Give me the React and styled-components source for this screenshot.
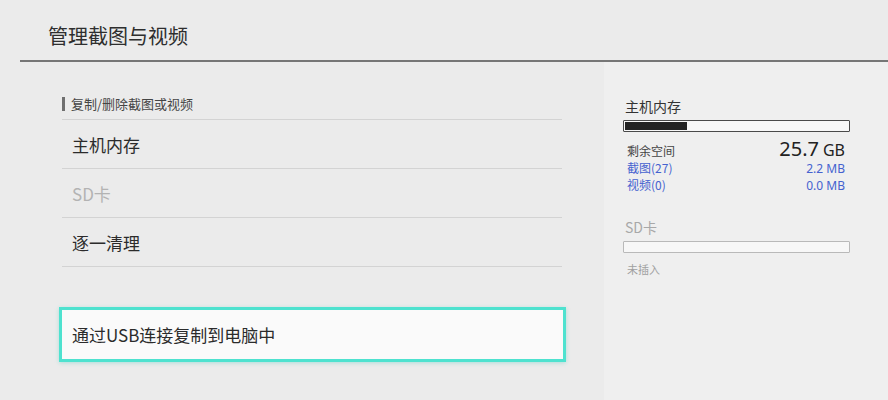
import React from "react";
import styled, { createGlobalStyle } from "styled-components";

const Global = createGlobalStyle`
  html, body { margin: 0; padding: 0; }
  body {
    font-family: "Noto Sans", "Noto Sans CJK SC", sans-serif;
    background: #ebebeb;
  }
`;

const Page = styled.div`
  width: 888px;
  height: 400px;
  overflow: hidden;
  background: #ebebeb;
  display: flex;
  flex-direction: column;
`;

const Header = styled.header`
  height: 62px;
  margin-left: 20px;
  padding-left: 28px;
  border-bottom: 2px solid #767676;
  display: flex;
  align-items: center;
  box-sizing: border-box;
  flex: none;
`;

const Title = styled.h1`
  margin: 0;
  font-size: 20px;
  font-weight: 400;
  color: #2e2e2e;
  line-height: 1;
  padding-top: 12px;
  font-family: "Noto Sans CJK SC", sans-serif;
`;

const Body = styled.div`
  flex: 1;
  display: flex;
`;

const Left = styled.section`
  width: 604px;
  box-sizing: border-box;
  padding: 28px 42px 0 62px;
  display: flex;
  flex-direction: column;
`;

const SectionHead = styled.div`
  height: 30px;
  box-sizing: border-box;
  display: flex;
  align-items: center;
  gap: 6px;
  border-bottom: 1px solid #d3d3d3;
  font-size: 13px;
  color: #454545;
  font-family: "Noto Sans CJK SC", sans-serif;
  padding-bottom: 2px;
`;

const Marker = styled.span`
  width: 3px;
  height: 14px;
  background: #6f6f6f;
`;

const Row = styled.div`
  height: 49px;
  box-sizing: border-box;
  border-bottom: 1px solid #d3d3d3;
  display: flex;
  align-items: center;
  padding-left: 10px;
  font-size: 17px;
  font-family: "Noto Sans CJK SC", sans-serif;
  color: ${(p) => (p.$disabled ? "#b3b3b3" : "#2b2b2b")};
`;

const UsbButton = styled.div`
  margin-top: 40px;
  margin-left: -3px;
  width: 507px;
  height: 55px;
  box-sizing: border-box;
  border: 3px solid #4ee2cf;
  background: #fafafa;
  box-shadow: 0 1px 4px rgba(60, 200, 190, 0.35);
  display: flex;
  align-items: center;
  padding-left: 10px;
  font-size: 17px;
  color: #2b2b2b;
  font-family: "Noto Sans CJK SC", sans-serif;
`;

const Right = styled.aside`
  flex: 1;
  background: #efefef;
  padding: 34px 38px 0 19px;
  display: flex;
  flex-direction: column;
`;

const StoreTitle = styled.div`
  font-size: 14px;
  line-height: 20px;
  color: ${(p) => (p.$muted ? "#a8a8a8" : "#333")};
  padding-left: 2px;
  font-family: "Noto Sans CJK SC", sans-serif;
`;

const Bar = styled.div`
  margin-top: 4px;
  height: 12px;
  box-sizing: border-box;
  border: 1px solid ${(p) => (p.$muted ? "#b9b9b9" : "#4a4a4a")};
  background: #f7f7f7;
  border-radius: 1px;
  padding: 1px;
  display: flex;
`;

const Fill = styled.div`
  background: #222;
  height: 100%;
`;

const StatRow = styled.div`
  display: flex;
  justify-content: space-between;
  align-items: baseline;
  padding: 0 5px 0 4px;
  height: ${(p) => (p.$tall ? "24px" : "17px")};
  font-size: 12px;
  color: ${(p) => (p.$blue ? "#4562cf" : "#444")};
  font-family: "Noto Sans CJK SC", sans-serif;
`;

const Big = styled.span`
  font-size: 20px;
  color: #222;
  font-family: "Noto Sans", sans-serif;
  & small {
    font-size: 16px;
    margin-left: 4px;
  }
`;

const Val = styled.span`
  font-family: "Noto Sans", sans-serif;
  font-size: 12px;
`;

const Muted = styled.div`
  margin-top: 8px;
  padding-left: 4px;
  font-size: 11px;
  color: #a0a0a0;
  font-family: "Noto Sans CJK SC", sans-serif;
`;

const Spacer = styled.div`
  height: ${(p) => p.$h}px;
`;

export default function App() {
  return (
    <Page>
      <Global />
      <Header>
        <Title>管理截图与视频</Title>
      </Header>
      <Body>
        <Left>
          <SectionHead>
            <Marker />
            复制/删除截图或视频
          </SectionHead>
          <Row>主机内存</Row>
          <Row $disabled>SD卡</Row>
          <Row>逐一清理</Row>
          <UsbButton>通过USB连接复制到电脑中</UsbButton>
        </Left>
        <Right>
          <StoreTitle>主机内存</StoreTitle>
          <Bar>
            <Fill style={{ width: "62px" }} />
          </Bar>
          <Spacer $h={3} />
          <StatRow $tall>
            <span>剩余空间</span>
            <Big>
              25.7<small>GB</small>
            </Big>
          </StatRow>
          <StatRow $blue>
            <span>截图(27)</span>
            <Val>2.2 MB</Val>
          </StatRow>
          <StatRow $blue>
            <span>视频(0)</span>
            <Val>0.0 MB</Val>
          </StatRow>
          <Spacer $h={24} />
          <StoreTitle $muted>SD卡</StoreTitle>
          <Bar $muted />
          <Muted>未插入</Muted>
        </Right>
      </Body>
    </Page>
  );
}
